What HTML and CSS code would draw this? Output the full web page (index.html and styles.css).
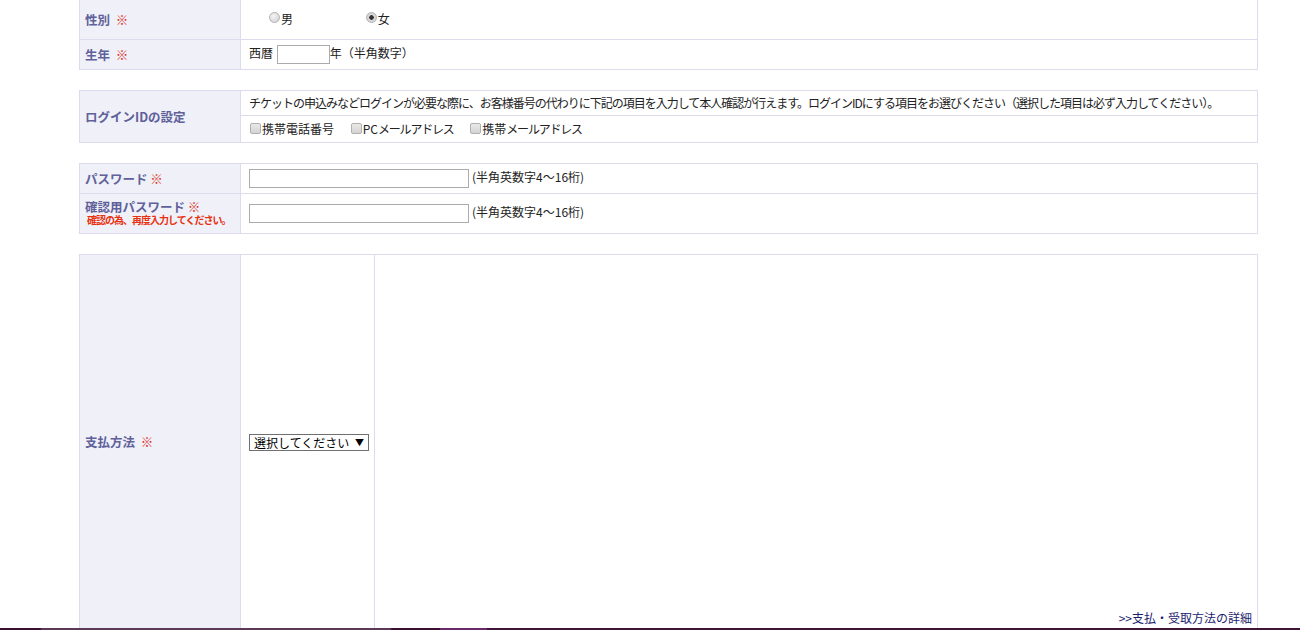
FILE: index.html
```html
<!DOCTYPE html>
<html lang="ja">
  <head>
    <meta charset="UTF-8" />
    <meta name="viewport" content="width=device-width, initial-scale=1.0" />
    <title>会員登録</title>
    <link rel="stylesheet" href="styles.css">
  </head>
  <body>
    <div class="page">
      <form class="entry-form">
        <!-- 基本情報 -->
        <table class="form-table first">
          <tr class="row-sex">
            <th>性別&nbsp;&nbsp;<span class="req">※</span></th>
            <td>
              <label class="radio-item"><input type="radio" name="sex" value="m" />男</label>
              <label class="radio-item"><input type="radio" name="sex" value="f" checked />女</label>
            </td>
          </tr>
          <tr class="row-year">
            <th>生年&nbsp;&nbsp;<span class="req">※</span></th>
            <td>西暦 <input type="text" class="year-input" />年（半角数字）</td>
          </tr>
        </table>

        <!-- ログインID -->
        <table class="form-table">
          <tr class="row-login-text">
            <th rowspan="2">ログインIDの設定</th>
            <td class="login-text">チケットの申込みなどログインが必要な際に、お客様番号の代わりに下記の項目を入力して本人確認が行えます。ログインIDにする項目をお選びください（選択した項目は必ず入力してください）。</td>
          </tr>
          <tr class="row-login-check">
            <td>
              <label class="check-item"><input type="checkbox" />携帯電話番号</label>
              <label class="check-item"><input type="checkbox" />PC<span class="kana">メールアドレス</span></label>
              <label class="check-item"><input type="checkbox" />携帯<span class="kana">メールアドレス</span></label>
            </td>
          </tr>
        </table>

        <!-- パスワード -->
        <table class="form-table">
          <tr class="row-pass">
            <th>パスワード <span class="req">※</span></th>
            <td><input type="password" class="pass-input" />(半角英数字4～16桁)</td>
          </tr>
          <tr class="row-pass-confirm">
            <th class="two-line">
              <div>確認用パスワード <span class="req">※</span></div>
              <div class="note">確認の為、再度入力してください。</div>
            </th>
            <td><input type="password" class="pass-input" />(半角英数字4～16桁)</td>
          </tr>
        </table>

        <!-- 支払方法 -->
        <table class="form-table">
          <tr class="row-pay">
            <th>支払方法&nbsp;&nbsp;<span class="req">※</span></th>
            <td class="pay-select">
              <span class="select-wrap">
                <select>
                  <option>選択してください</option>
                  <option>クレジットカード</option>
                  <option>コンビニ支払</option>
                </select>
                <span class="select-arrow">▼</span>
              </span>
            </td>
            <td class="pay-info">
              <a href="#" class="detail-link">&gt;&gt;支払・受取方法の詳細</a>
            </td>
          </tr>
        </table>
      </form>
    </div>
    <div class="footer-bar"></div>
  </body>
</html>
```

FILE: styles.css
```css
/* base */
body {
  margin: 0;
  background: #fff;
  font-family: "Noto Sans CJK JP", "Liberation Sans", sans-serif;
  font-size: 12px;
  color: #222;
  overflow: hidden;
}

.page {
  padding: 0 43px 0 79px;
}

/* form tables */
.form-table {
  width: 1179px;
  border-collapse: collapse;
  margin-bottom: 20px;
}

.form-table.first {
  margin-top: -1px;
}

.form-table th,
.form-table td {
  border: 1px solid #dcdcec;
  padding: 0 0 0 8px;
  text-align: left;
  font-weight: normal;
  line-height: 16px;
}

.form-table th {
  width: 155px;
  padding-left: 5px;
  background-color: #eff0f8;
  color: #60609a;
  font-weight: bold;
  font-size: 12.5px;
}

.form-table th.two-line {
  line-height: 15px;
  padding-bottom: 2px;
}

.req {
  color: #e0321e;
}

.note {
  color: #e8300f;
  font-size: 10px;
  line-height: 12px;
  padding-left: 2px;
  letter-spacing: -1px;
  white-space: nowrap;
}

/* rows */
.row-sex { height: 40px; }
.row-year { height: 30px; }
.row-login-text { height: 25px; }
.row-login-check { height: 27px; }
.row-pass { height: 30px; }
.row-pass-confirm { height: 40px; }
.row-pay { height: 375px; }

.login-text {
  letter-spacing: -1px;
  white-space: nowrap;
}

.kana {
  letter-spacing: -1.2px;
}

/* radios */
.radio-item {
  display: inline-flex;
  align-items: center;
  margin-left: 20px;
  margin-right: 70px;
  position: relative;
  top: -1px;
}

.radio-item + .radio-item {
  margin-left: 0;
}

input[type="radio"] {
  appearance: none;
  width: 11px;
  height: 11px;
  margin: 0 1px 4px 0;
  border: 1px solid #b4b4b4;
  border-radius: 50%;
  background: radial-gradient(circle at 40% 35%, #f4f4f4 0, #d6d6d6 80%);
  box-sizing: border-box;
}

input[type="radio"]:checked {
  background: radial-gradient(circle, #333 0, #333 2px, #d8d8d8 2.5px, #d0d0d0 100%);
}

/* checkboxes */
.check-item {
  display: inline-flex;
  align-items: center;
  margin-right: 13px;
}

input[type="checkbox"] {
  appearance: none;
  width: 11px;
  height: 11px;
  margin: 0 1px 2px 1px;
  border: 1px solid #b0b0b0;
  border-radius: 2px;
  background: linear-gradient(#e9e9e9, #d3d3d3);
  box-sizing: border-box;
}

/* text inputs */
.year-input {
  width: 53px;
  height: 19px;
  box-sizing: border-box;
  border: 1px solid #ababab;
  padding: 0 2px;
  margin: 0 0 0 1px;
  vertical-align: middle;
}

.pass-input {
  width: 220px;
  height: 19px;
  box-sizing: border-box;
  border: 1px solid #ababab;
  padding: 0 2px;
  margin: 0 3px 0 0;
  vertical-align: middle;
}

/* payment */
.pay-select {
  width: 125px;
}

.select-wrap {
  position: relative;
  display: inline-block;
}

.select-wrap select {
  appearance: none;
  width: 120px;
  height: 17px;
  border: 1px solid #707070;
  border-radius: 0;
  background: #fff;
  padding: 0 0 0 4px;
  font-family: "Noto Sans CJK JP", sans-serif;
  font-size: 12px;
  line-height: 15px;
  color: #000;
  display: block;
}

.select-arrow {
  position: absolute;
  right: 5px;
  top: 1px;
  font-size: 9px;
  line-height: 15px;
  color: #000;
  pointer-events: none;
}

.pay-info {
  vertical-align: bottom;
  text-align: right !important;
  padding: 0 5px 3px 0 !important;
}

.detail-link {
  color: #1c1c6e;
  text-decoration: none;
}

/* bottom bar */
.footer-bar {
  position: fixed;
  left: 0;
  right: 0;
  bottom: 0;
  height: 2px;
  background: linear-gradient(to right, #3a0f33 0, #3a0f33 40px, #5a3a58 42px, #5a3a58 390px, #3a0f33 392px, #3a0f33 440px, #6a2a6a 440px, #6a2a6a 487px, #3e1538 487px);
}
```
